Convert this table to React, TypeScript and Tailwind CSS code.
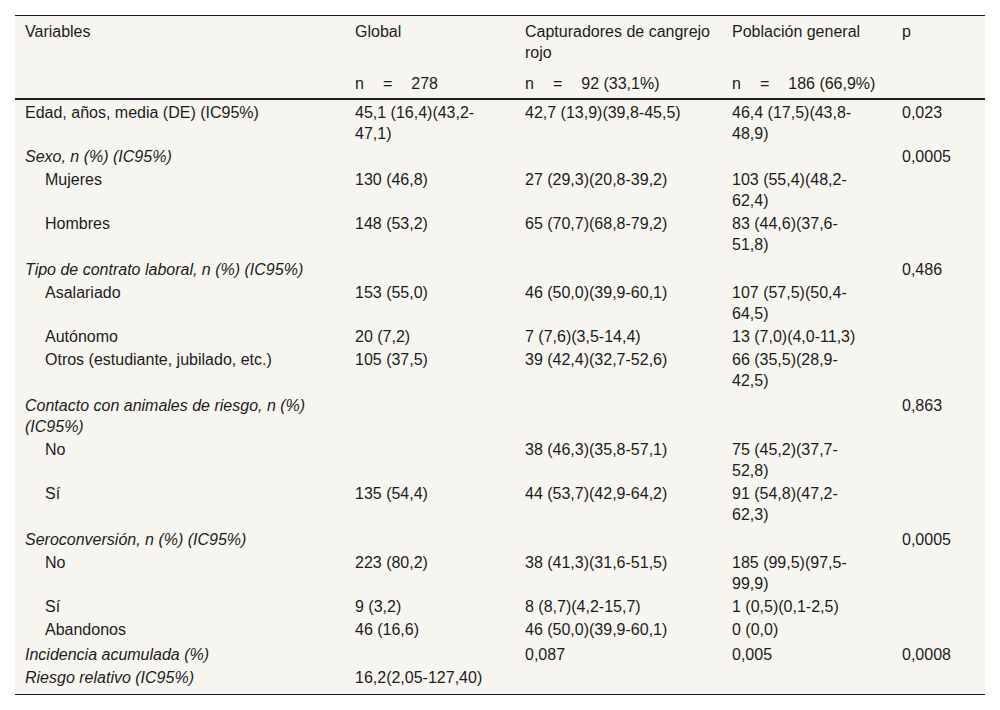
type Row = {
  label: string;
  kind: "main" | "group" | "sub";
  extra?: boolean;
  cells: [string, string, string, string];
};

const ROWS: Row[] = [
  {
    label: "Edad, años, media (DE) (IC95%)",
    kind: "main",
    cells: ["45,1 (16,4)(43,2-47,1)", "42,7 (13,9)(39,8-45,5)", "46,4 (17,5)(43,8-48,9)", "0,023"],
  },
  { label: "Sexo, n (%) (IC95%)", kind: "group", cells: ["", "", "", "0,0005"] },
  {
    label: "Mujeres",
    kind: "sub",
    cells: ["130 (46,8)", "27 (29,3)(20,8-39,2)", "103 (55,4)(48,2-62,4)", ""],
  },
  {
    label: "Hombres",
    kind: "sub",
    cells: ["148 (53,2)", "65 (70,7)(68,8-79,2)", "83 (44,6)(37,6-51,8)", ""],
  },
  {
    label: "Tipo de contrato laboral, n (%) (IC95%)",
    kind: "group",
    extra: true,
    cells: ["", "", "", "0,486"],
  },
  {
    label: "Asalariado",
    kind: "sub",
    cells: ["153 (55,0)", "46 (50,0)(39,9-60,1)", "107 (57,5)(50,4-64,5)", ""],
  },
  {
    label: "Autónomo",
    kind: "sub",
    cells: ["20 (7,2)", "7 (7,6)(3,5-14,4)", "13 (7,0)(4,0-11,3)", ""],
  },
  {
    label: "Otros (estudiante, jubilado, etc.)",
    kind: "sub",
    cells: ["105 (37,5)", "39 (42,4)(32,7-52,6)", "66 (35,5)(28,9-42,5)", ""],
  },
  {
    label: "Contacto con animales de riesgo, n (%) (IC95%)",
    kind: "group",
    extra: true,
    cells: ["", "", "", "0,863"],
  },
  {
    label: "No",
    kind: "sub",
    cells: ["", "38 (46,3)(35,8-57,1)", "75 (45,2)(37,7-52,8)", ""],
  },
  {
    label: "Sí",
    kind: "sub",
    cells: ["135 (54,4)", "44 (53,7)(42,9-64,2)", "91 (54,8)(47,2-62,3)", ""],
  },
  {
    label: "Seroconversión, n (%) (IC95%)",
    kind: "group",
    extra: true,
    cells: ["", "", "", "0,0005"],
  },
  {
    label: "No",
    kind: "sub",
    cells: ["223 (80,2)", "38 (41,3)(31,6-51,5)", "185 (99,5)(97,5-99,9)", ""],
  },
  {
    label: "Sí",
    kind: "sub",
    cells: ["9 (3,2)", "8 (8,7)(4,2-15,7)", "1 (0,5)(0,1-2,5)", ""],
  },
  {
    label: "Abandonos",
    kind: "sub",
    cells: ["46 (16,6)", "46 (50,0)(39,9-60,1)", "0 (0,0)", ""],
  },
  {
    label: "Incidencia acumulada (%)",
    kind: "group",
    extra: true,
    cells: ["", "0,087", "0,005", "0,0008"],
  },
  {
    label: "Riesgo relativo (IC95%)",
    kind: "group",
    cells: ["16,2(2,05-127,40)", "", "", ""],
  },
];

// per-column horizontal padding for the four value columns
const COL_PAD = ["pl-[10px] pr-[10px]", "pl-[10px] pr-[10px]", "pl-[10px] pr-[28px]", "pl-[10px] pr-[10px]"];

function NCount({ value }: { value: string }) {
  return (
    <span className="whitespace-nowrap">
      n<span className="mx-[19px]">=</span>
      {value}
    </span>
  );
}

export default function App() {
  return (
    <div className="min-h-[710px] bg-white pt-[15px] px-[15px] font-['Liberation_Sans',Arial,sans-serif] text-[16px] leading-[21px] text-[#1c1c1c]">
      <table className="w-[970px] table-fixed border-collapse bg-[#f7f5ef] border-t border-b border-[#1c1c1c]">
        <colgroup>
          <col className="w-[330px]" />
          <col className="w-[170px]" />
          <col className="w-[207px]" />
          <col className="w-[170px]" />
          <col className="w-[93px]" />
        </colgroup>
        <thead>
          <tr className="align-top">
            <th className="px-[10px] pt-[5px] pb-[5px] text-left font-normal">Variables</th>
            <th className="px-[10px] pt-[5px] pb-[5px] text-left font-normal">Global</th>
            <th className="px-[10px] pt-[5px] pb-[5px] text-left font-normal">
              Capturadores de cangrejo rojo
            </th>
            <th className="pl-[10px] pr-[28px] pt-[5px] pb-[5px] text-left font-normal">
              Población general
            </th>
            <th className="px-[10px] pt-[5px] pb-[5px] text-left font-normal">p</th>
          </tr>
          <tr className="align-top border-b-2 border-[#1c1c1c]">
            <th className="px-[10px] pt-[5px] pb-[4px]" />
            <th className="px-[10px] pt-[5px] pb-[4px] text-left font-normal">
              <NCount value="278" />
            </th>
            <th className="px-[10px] pt-[5px] pb-[4px] text-left font-normal">
              <NCount value="92 (33,1%)" />
            </th>
            <th className="pl-[10px] pr-[28px] pt-[5px] pb-[4px] text-left font-normal">
              <NCount value="186 (66,9%)" />
            </th>
            <th className="px-[10px] pt-[5px] pb-[4px]" />
          </tr>
        </thead>
        <tbody>
          {ROWS.map((row, i) => {
            const first = i === 0;
            const last = i === ROWS.length - 1;
            const top = row.extra ? "pt-[3px]" : first ? "pt-[2px]" : "pt-px";
            const pad = `${top} ${last ? "pb-[6px]" : "pb-px"}`;
            return (
              <tr key={i} className="align-top">
                <td
                  className={`${pad} pr-[10px] ${row.kind === "sub" ? "pl-[30px]" : "pl-[10px]"} ${
                    row.kind === "group" ? "italic" : ""
                  }`}
                >
                  {row.label}
                </td>
                {row.cells.map((c, j) => (
                  <td key={j} className={`${pad} ${COL_PAD[j]}`}>
                    {c}
                  </td>
                ))}
              </tr>
            );
          })}
        </tbody>
      </table>
    </div>
  );
}
